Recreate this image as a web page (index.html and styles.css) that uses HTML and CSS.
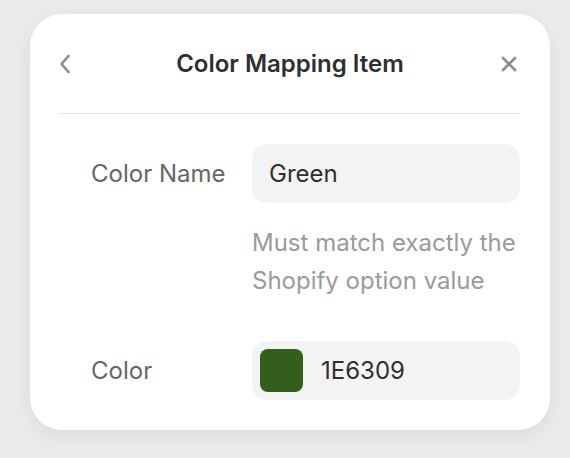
FILE: index.html
```html
<!DOCTYPE html>
<html>
<head>
<meta charset="utf-8">
<link rel="stylesheet" href="styles.css">
</head>
<body>
<div class="card">
  <div class="header">
    <svg class="icon back" width="12" height="20" viewBox="0 0 12 20"><path d="M9.5 2 L2.5 10 L9.5 18" fill="none" stroke="#8a8a8a" stroke-width="2.6" stroke-linecap="round" stroke-linejoin="round"/></svg>
    <div class="title">Color Mapping Item</div>
    <svg class="icon close" width="16" height="16" viewBox="0 0 16 16"><path d="M2 2 L14 14 M14 2 L2 14" fill="none" stroke="#8a8a8a" stroke-width="2.6" stroke-linecap="round"/></svg>
  </div>
  <div class="divider"></div>
  <div class="form">
    <div class="row">
      <div class="label">Color Name</div>
      <div class="field">
        <div class="input">Green</div>
        <div class="hint">Must match exactly the Shopify option value</div>
      </div>
    </div>
    <div class="row row-color">
      <div class="label">Color</div>
      <div class="field">
        <div class="input color-input"><span class="swatch"></span><span>1E6309</span></div>
      </div>
    </div>
  </div>
</div>
</body>
</html>
```
FILE: styles.css
```css
html, body {
  margin: 0;
  padding: 0;
}
body {
  background: #ebebeb;
  width: 570px;
  height: 458px;
  overflow: hidden;
  font-family: Inter, "Noto Sans", sans-serif;
  padding: 14px 20px 0 30px;
  box-sizing: border-box;
}
.card {
  width: 520px;
  height: 416px;
  box-sizing: border-box;
  background: #fff;
  border-radius: 32px;
  box-shadow: 0 6px 22px rgba(0, 0, 0, 0.07);
  padding: 35px 30px 30px 30px;
}
.header {
  height: 30px;
  display: flex;
  align-items: center;
  justify-content: space-between;
  position: relative;
}
.icon.back {
  margin-left: -1px;
}
.icon.close {
  margin-right: 3px;
}
.title {
  position: absolute;
  left: 0;
  right: 0;
  text-align: center;
  font-size: 24px;
  line-height: 30px;
  font-weight: 600;
  color: #2f2f2f;
  pointer-events: none;
}
.divider {
  height: 1px;
  background: #e6e6e6;
  margin-top: 34px;
}
.form {
  padding: 30px 0 0 31px;
}
.row {
  display: flex;
  align-items: flex-start;
}
.row-color {
  margin-top: 41px;
}
.label {
  width: 161px;
  flex: none;
  height: 59px;
  line-height: 59px;
  font-size: 24px;
  color: #666;
}
.field {
  flex: 1;
}
.input {
  height: 59px;
  box-sizing: border-box;
  background: #f3f3f3;
  border-radius: 15px;
  padding-left: 17px;
  display: flex;
  align-items: center;
  font-size: 24px;
  color: #2f2f2f;
}
.hint {
  margin-top: 21px;
  font-size: 24px;
  line-height: 38px;
  color: #9a9a9a;
}
.color-input {
  padding-left: 8px;
  gap: 18px;
}
.swatch {
  width: 43px;
  height: 43px;
  border-radius: 8px;
  background: #345e1c;
  flex: none;
}
```
